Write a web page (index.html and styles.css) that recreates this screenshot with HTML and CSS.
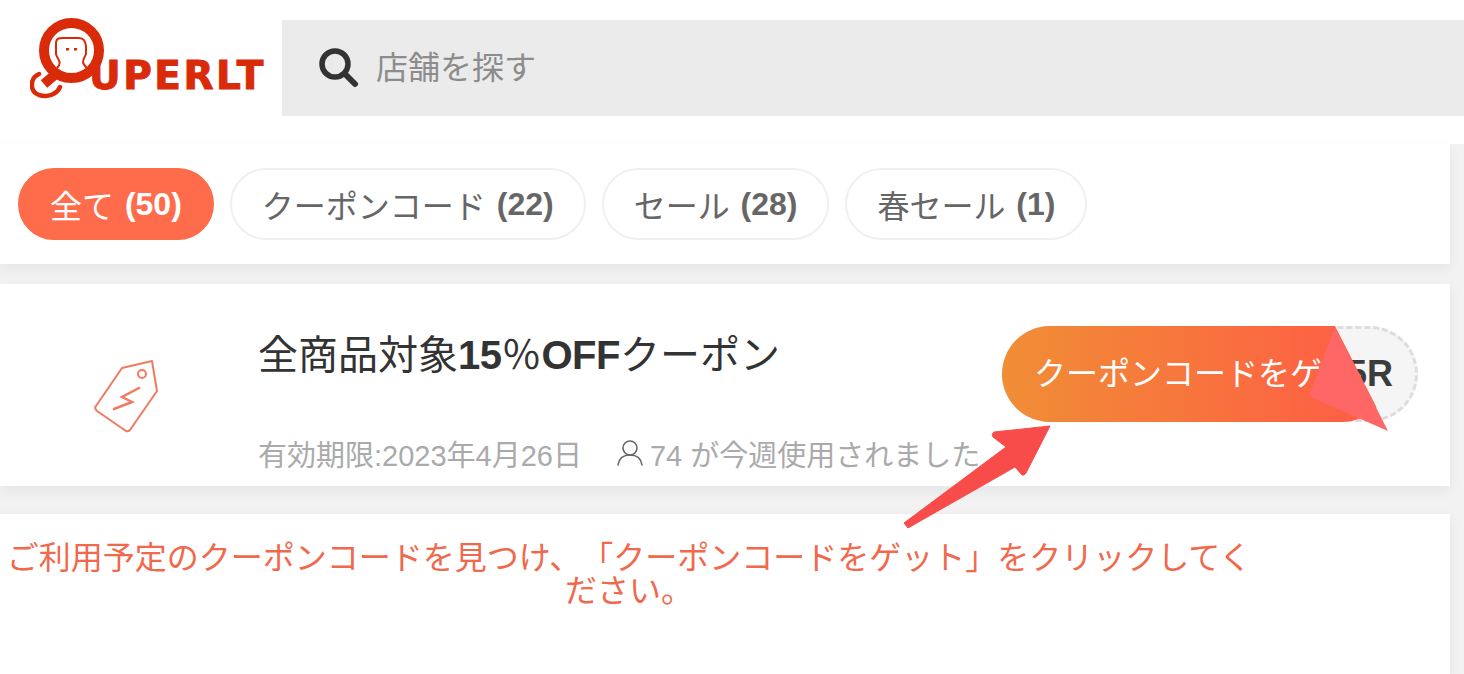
FILE: index.html
```html
<!DOCTYPE html>
<html lang="ja">
  <head>
    <meta charset="UTF-8" />
    <title>SUPERLT クーポン</title>
    <link rel="stylesheet" href="styles.css">
  </head>
  <body>
    <header class="site-header">
      <a class="logo" href="#">
        <svg class="logo-mark" width="76" height="84" viewBox="0 0 76 84">
          <circle cx="41.5" cy="32.5" r="27.5" fill="none" stroke="#d92b0a" stroke-width="10" />
          <path d="M27 55 L14 66" stroke="#d92b0a" stroke-width="10" fill="none" />
          <path d="M9 56 C0 60 -1 73 9 77 C18 80 27 76 30 69" stroke="#d92b0a" stroke-width="4.5" fill="none" stroke-linecap="round" />
          <path d="M27 50 C33 44 27 41 26 36 L26 24 C27 20 29 20 33 20 L49 20 C54 20 55 23 56 28 L56 36 C54 41 50 44 57 50" stroke="#d92b0a" stroke-width="2" fill="none" />
          <rect x="36" y="30" width="3" height="2.5" fill="#d92b0a" />
          <rect x="44" y="30" width="3" height="2.5" fill="#d92b0a" />
        </svg>
        <span class="logo-text">UPERLT</span>
      </a>
      <div class="search-box">
        <svg width="40" height="40" viewBox="0 0 40 40">
          <circle cx="16" cy="16" r="13" fill="none" stroke="#333" stroke-width="5.5" />
          <path d="M26 26 L36 36" stroke="#333" stroke-width="6" stroke-linecap="round" />
        </svg>
        <input class="search-input" type="text" placeholder="店舗を探す" />
      </div>
    </header>

    <main class="content">
      <section class="card filters">
        <a class="chip chip-active" href="#">全て <b>(50)</b></a>
        <a class="chip" href="#">クーポンコード <b>(22)</b></a>
        <a class="chip" href="#">セール <b>(28)</b></a>
        <a class="chip" href="#">春セール <b>(1)</b></a>
      </section>

      <section class="card coupon">
        <div class="coupon-icon">
          <svg width="70" height="78" viewBox="0 0 70 78">
            <path d="M29 11 L59 4 L64 34 L37 73 Q35 75 33 74 L4 54 Q1 51 3 49 Z" fill="none" stroke="#ee7a62" stroke-width="2" stroke-linejoin="round" />
            <circle cx="49" cy="17" r="4" fill="none" stroke="#ee7a62" stroke-width="2" />
            <path d="M46 31 L29 40 L39 45 L21 52" fill="none" stroke="#ee7a62" stroke-width="2.5" stroke-linecap="round" />
          </svg>
        </div>
        <div class="coupon-body">
          <h3 class="coupon-title">全商品対象<b>15</b>％<b>OFF</b>クーポン</h3>
          <div class="coupon-meta">
            <span>有効期限:2023年4月26日</span>
            <span class="used">
              <svg class="used-icon" width="28" height="28" viewBox="0 0 28 28">
                <circle cx="14" cy="9" r="7" fill="none" stroke="#666" stroke-width="1.6" />
                <path d="M2 26 C3 19 8 16 14 16 C20 16 25 19 26 26" fill="none" stroke="#666" stroke-width="1.6" stroke-linecap="round" />
              </svg>
              74 が今週使用されました
            </span>
          </div>
        </div>
        <div class="coupon-action">
          <span class="coupon-code">5R</span>
          <a class="coupon-btn" href="#">クーポンコードをゲット</a>
        </div>
      </section>

      <section class="card note">
        <p class="note-text">ご利用予定のクーポンコードを見つけ、「クーポンコードをゲット」をクリックしてください。</p>
      </section>
    </main>

    <!-- annotation drawn over the screenshot -->
    <svg class="annotation" width="1464" height="674" viewBox="0 0 1464 674">
      <path d="M1335 327 L1388 431 L1313 398 Q1308 395 1311 390 Z" fill="#ff6766" />
      <path d="M1050 426 L994 432 Q991 434 993 437 L1006 447 L904 523 L908 528 L1015 467 L1022 475 Q1024 476 1026 473 Z" fill="#f74c4a" stroke="#f74c4a" stroke-linejoin="round" />
    </svg>
  </body>
</html>
```

FILE: styles.css
```css
* {
  box-sizing: border-box;
}

body {
  margin: 0;
  height: 674px;
  overflow: hidden;
  position: relative;
  font-family: "Liberation Sans", "Noto Sans CJK JP", sans-serif;
  background-color: #f2f2f2;
  color: #333;
}

a {
  text-decoration: none;
}

.site-header {
  display: flex;
  height: 144px;
  padding-top: 20px;
  background-color: #fff;
}

.logo {
  display: flex;
  align-items: flex-start;
  width: 282px;
  padding: -2px 0 0 30px;
  padding-left: 30px;
}

.logo-mark {
  flex-shrink: 0;
  margin-top: -2px;
}

.logo-text {
  margin: 33px 0 0 -17px;
  font-family: "DejaVu Sans", sans-serif;
  font-size: 39px;
  font-weight: 700;
  line-height: 46px;
  letter-spacing: 2.5px;
  -webkit-text-stroke: 1px #d92b0a;
  color: #d92b0a;
}

.search-box {
  display: flex;
  flex: 1;
  align-items: center;
  gap: 15px;
  height: 96px;
  padding-left: 37px;
  background-color: #ebebeb;
}

.search-input {
  flex: 1;
  border: none;
  outline: none;
  background: transparent;
  font-family: inherit;
  font-size: 32px;
}

.search-input::placeholder {
  color: #8c8c8c;
  opacity: 1;
}

.content {
  width: 1450px;
}

.card {
  background-color: #fff;
  box-shadow: 0 4px 12px rgba(0, 0, 0, 0.06);
}

.filters {
  display: flex;
  gap: 16px;
  height: 120px;
  padding: 24px 18px;
  margin-bottom: 20px;
}

.chip {
  display: flex;
  align-items: center;
  gap: 2px;
  height: 72px;
  padding: 0 30px;
  border: 2px solid #f0f0f0;
  border-radius: 36px;
  font-size: 32px;
  white-space: pre;
  color: #666;
}

.chip-active {
  border-color: #ff6c4b;
  background-color: #ff6c4b;
  color: #fff;
}

.coupon {
  display: flex;
  height: 202px;
  margin-bottom: 28px;
}

.coupon-icon {
  display: flex;
  justify-content: center;
  align-items: center;
  width: 258px;
  padding: 22px 3px 0 0;
}

.coupon-body {
  flex: 1;
  padding-top: 41px;
}

.coupon-title {
  margin: 0;
  font-size: 40px;
  font-weight: 400;
  line-height: 60px;
  white-space: nowrap;
}

.coupon-title b {
  letter-spacing: -0.5px;
}

.coupon-meta {
  display: flex;
  gap: 34px;
  margin-top: 50px;
  font-size: 29px;
  line-height: 42px;
  white-space: nowrap;
  color: #aaa;
}

.used {
  display: flex;
  align-items: center;
  gap: 6px;
}

.used-icon {
  margin-top: -6px;
}

.coupon-action {
  position: relative;
  display: flex;
  align-items: center;
  justify-content: flex-end;
  width: 416px;
  height: 96px;
  margin: 42px 32px 0 0;
  padding-right: 22px;
  border: 3px dashed #ddd;
  border-radius: 48px;
  background-color: #f5f5f5;
}

.coupon-code {
  font-size: 36px;
  font-weight: 700;
  color: #3c3c3c;
}

.coupon-btn {
  position: absolute;
  top: -3px;
  left: -3px;
  display: flex;
  align-items: center;
  width: 388px;
  height: 96px;
  padding: 0 0 6px 32px;
  border-radius: 48px;
  background: linear-gradient(90deg, #f08e35, #ff5a46);
  clip-path: polygon(0 0, 333px 0, 382px 100%, 0 100%);
  font-size: 32px;
  white-space: nowrap;
  color: #fff;
}

.note {
  height: 160px;
}

.note-text {
  width: 1258px;
  margin: 0;
  padding-top: 28px;
  font-size: 32px;
  line-height: 33px;
  text-align: center;
  text-spacing-trim: space-all;
  color: #f0694d;
}

.annotation {
  position: absolute;
  top: 0;
  left: 0;
}
```
